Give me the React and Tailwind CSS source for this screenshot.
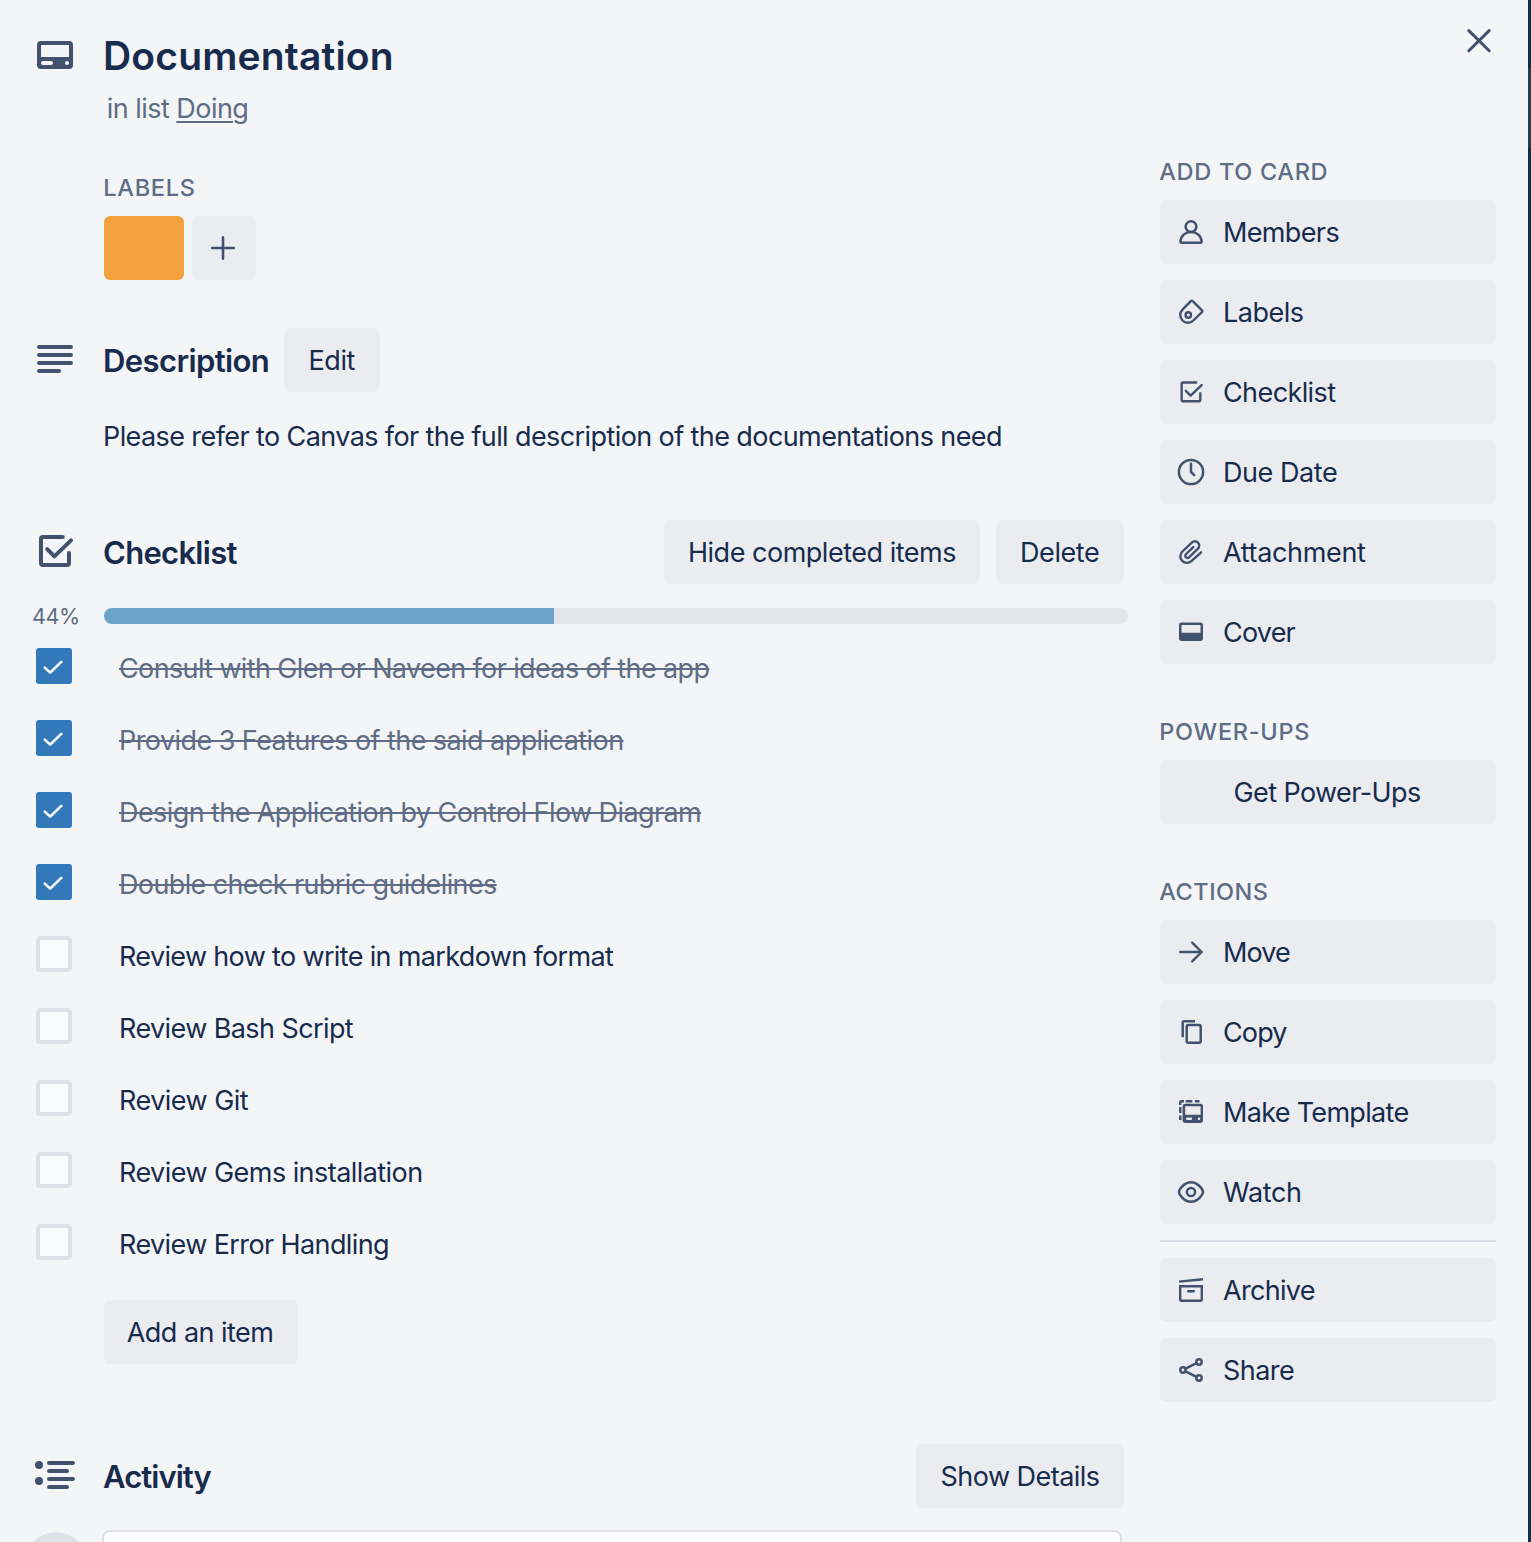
import React from "react";

const stroke = {
  fill: "none",
  stroke: "currentColor",
  strokeLinecap: "round",
  strokeLinejoin: "round",
};

function HeadIcon({ children, className = "" }) {
  return (
    <svg viewBox="0 0 24 24" className={`size-12 shrink-0 text-[#42526e] ${className}`} fill="currentColor">
      {children}
    </svg>
  );
}

function SideIcon({ children, box = "0 0 32 32" }) {
  return (
    <svg viewBox={box} className="size-8 shrink-0 text-[#42526e]" fill="currentColor">
      {children}
    </svg>
  );
}

const checkSquare = (
  <g {...stroke} strokeWidth="2">
    <path d="M15.9 5H6a1 1 0 0 0-1 1v12a1 1 0 0 0 1 1h12a1 1 0 0 0 1-1v-5" />
    <path d="M8.1 11.1l3.6 3.6 8.3-8" />
  </g>
);

const icons = {
  members: (
    <SideIcon>
      <g {...stroke} strokeWidth="2.5">
        <circle cx="16" cy="10.6" r="5.4" />
        <path d="M5.4 25.4C5.8 20 10.2 16 16 16s10.2 4 10.6 9.4a1.3 1.3 0 0 1-1.3 1.3H6.7a1.3 1.3 0 0 1-1.3-1.3z" />
      </g>
    </SideIcon>
  ),
  labels: (
    <SideIcon>
      <g {...stroke} strokeWidth="2.4">
        <path d="M7.5 13.7L15.8 5.2a1.3 1.3 0 0 1 1.9 0l9.3 9.1a1.3 1.3 0 0 1 0 1.9l-8.7 8.3A7.6 7.6 0 0 1 7.5 13.7z" />
        <circle cx="13.3" cy="19" r="2.7" />
      </g>
    </SideIcon>
  ),
  checklist: (
    <SideIcon box="0 0 24 24">
      <g {...stroke} strokeWidth="1.8">
        <path d="M15.9 4.900H6a1 1 0 0 0-1 1v12a1 1 0 0 0 1 1h12a1 1 0 0 0 1-1v-5" />
        <path d="M8.100 11.100l3.600 3.600 8.300-7.900" />
      </g>
    </SideIcon>
  ),
  due: (
    <SideIcon>
      <g {...stroke} strokeWidth="2.5">
        <circle cx="16" cy="16" r="12.1" />
        <path d="M16 7.8V16l3.2 3.2" />
      </g>
    </SideIcon>
  ),
  attachment: (
    <SideIcon box="0 0 24 24">
      <path
        {...stroke}
        strokeWidth="1.8"
        d="M19.6 12.2L12.3 18.8C10.3 20.6 7.3 20.6 5.4 18.7C3.5 16.8 3.5 13.7 5.4 11.8L12.6 4.9C13.9 3.6 15.9 3.6 17.2 4.9C18.5 6.2 18.5 8.2 17.2 9.4L10.5 16C9.8 16.7 8.8 16.7 8.2 16C7.5 15.4 7.5 14.4 8.2 13.7L13.7 8.3"
      />
    </SideIcon>
  ),
  cover: (
    <SideIcon>
      <path
        fillRule="evenodd"
        d="M6.7 6.4h18.6A2.7 2.7 0 0 1 28 9.1v13.2a2.7 2.7 0 0 1-2.7 2.7H6.7A2.7 2.7 0 0 1 4 22.3V9.1a2.7 2.7 0 0 1 2.7-2.7zM6.5 9.1v7.6h19V9.1z"
      />
    </SideIcon>
  ),
  move: (
    <SideIcon>
      <path {...stroke} strokeWidth="2.4" d="M5.2 16H26.6M17.2 6.7L26.6 16l-9.4 9.3" />
    </SideIcon>
  ),
  copy: (
    <SideIcon>
      <g {...stroke} strokeWidth="2.5">
        <path strokeLinecap="butt" d="M20 5.2H9a1.3 1.3 0 0 0-1.3 1.3V21.3" />
        <rect x="11.7" y="9" width="14" height="17.8" rx="1.5" />
      </g>
    </SideIcon>
  ),
  template: (
    <SideIcon>
      <path
        {...stroke}
        strokeLinecap="butt"
        strokeWidth="2.5"
        d="M5.3 9V6.6a1.3 1.3 0 0 1 1.3-1.3H9M10.7 5.3h6.6M20 5.3h4.5M5.3 11v6M5.3 19.5V24"
      />
      <path
        fillRule="evenodd"
        d="M10.3 7.7h15A2.7 2.7 0 0 1 28 10.4v13.9a2.7 2.7 0 0 1-2.7 2.7h-15a2.7 2.7 0 0 1-2.7-2.7V10.4a2.7 2.7 0 0 1 2.700-2.700zM10.2 10.300v8.400h15.400v-8.400zM12.200 21.600a1.200 1.200 0 0 0 0 2.400h3.700a1.200 1.200 0 0 0 0-2.400zM24 21.500a1.300 1.300 0 1 0 0 2.600 1.300 1.300 0 0 0 0-2.600z"
      />
    </SideIcon>
  ),
  watch: (
    <SideIcon>
      <g {...stroke} strokeWidth="2.5">
        <path d="M4 16C4 14.200 8.600 6.300 16 6.300S28 14.200 28 16S23.400 25.700 16 25.700S4 17.800 4 16z" />
        <circle cx="16" cy="16" r="4.1" />
      </g>
    </SideIcon>
  ),
  archive: (
    <SideIcon>
      <path {...stroke} strokeLinecap="butt" strokeWidth="2.4" d="M4.1 7.6L28 5.3" />
      <path
        {...stroke}
        strokeLinejoin="miter"
        strokeWidth="2.4"
        d="M5.2 12.2h21.6v13a1.5 1.5 0 0 1-1.5 1.5H6.7a1.5 1.5 0 0 1-1.5-1.5z"
      />
      <path {...stroke} strokeWidth="2.4" d="M13.2 17.3h5.6" />
    </SideIcon>
  ),
  share: (
    <SideIcon>
      <g {...stroke} strokeWidth="2.5">
        <circle cx="8" cy="16" r="2.7" />
        <circle cx="24" cy="8" r="2.7" />
        <circle cx="24" cy="24" r="2.7" />
        <path d="M10.5 14.7l11-5.5M10.5 17.3l11 5.5" />
      </g>
    </SideIcon>
  ),
};

const addToCard = [
  ["members", "Members", "tracking-[-0.64px]"],
  ["labels", "Labels", "tracking-[-0.5px]"],
  ["checklist", "Checklist", "tracking-[-0.6px]"],
  ["due", "Due Date", "tracking-[-0.43px]"],
  ["attachment", "Attachment", "tracking-[-0.35px]"],
  ["cover", "Cover", "tracking-[-0.8px]"],
];

const actions = [
  ["move", "Move", "tracking-[-0.9px]"],
  ["copy", "Copy", "tracking-[-0.85px]"],
  ["template", "Make Template", "tracking-[-0.68px]"],
  ["watch", "Watch", "tracking-[-0.35px]"],
];

const finalActions = [
  ["archive", "Archive", "tracking-[-0.7px]"],
  ["share", "Share", "tracking-[-0.54px]"],
];

const items = [
  ["Consult with Glen or Naveen for ideas of the app", true, "tracking-[-0.63px]"],
  ["Provide 3 Features of the said application", true, "tracking-[-0.565px]"],
  ["Design the Application by Control Flow Diagram", true, "tracking-[-0.585px]"],
  ["Double check rubric guidelines", true, "tracking-[-0.618px]"],
  ["Review how to write in markdown format", false, "tracking-[-0.65px]"],
  ["Review Bash Script", false, "tracking-[-0.59px]"],
  ["Review Git", false, "tracking-[-0.52px]"],
  ["Review Gems installation", false, "tracking-[-0.55px]"],
  ["Review Error Handling", false, "tracking-[-0.6px]"],
];

function SideButton({ item: [icon, label, tracking] }) {
  return (
    <button className="flex h-16 w-full items-center gap-4 rounded-md bg-[#ebecf0] pl-[15px] text-left">
      {icons[icon]}
      <span className={`pt-[2px] ${tracking}`}>{label}</span>
    </button>
  );
}

function SideHeading({ children, className }) {
  return (
    <h3 className={`-ml-[0.75px] h-6 text-[23.5px] leading-6 font-medium text-[#5e6c84] ${className}`}>{children}</h3>
  );
}

function Button({ children, className }) {
  return (
    <button className={`h-16 shrink-0 rounded-md bg-[#ebecf0] pt-[2px] text-left ${className}`}>{children}</button>
  );
}

function CheckItem({ item: [label, done, tracking] }) {
  return (
    <li className="flex h-[72px] items-start">
      {done ? (
        <span className="ml-9 flex size-9 shrink-0 items-center justify-center rounded-[3px] bg-[#3179ba]">
          <svg viewBox="0 0 36 36" className="size-9 text-white">
            <path {...stroke} strokeWidth="2.6" d="M8.8 19.6l5.4 5L25.3 13.900" />
          </svg>
        </span>
      ) : (
        <span className="ml-9 size-9 shrink-0 rounded-[4px] border-4 border-[#dfe1e6] bg-[#fafbfc]" />
      )}
      <span
        className={`mt-[5px] ml-[47px] leading-8 whitespace-nowrap ${tracking} ${
          done ? "text-[#5e6c84] line-through decoration-2" : ""
        }`}
      >
        {label}
      </span>
    </li>
  );
}

export default function App() {
  return (
    <div className="flex h-[1542px] w-[1531px] overflow-hidden bg-[#f4f5f7] font-['Inter',sans-serif] text-[27px] leading-8 text-[#172b4d]">
      <main className="w-[1128px] shrink-0">
        <header className="flex pt-8">
          <HeadIcon className="-mt-px ml-[31px]">
            <path
              fillRule="evenodd"
              d="M5 5h14a2 2 0 0 1 2 2v10a2 2 0 0 1-2 2H5a2 2 0 0 1-2-2V7a2 2 0 0 1 2-2zM5 7v6h14V7zM6 15a1 1 0 0 0 0 2h4a1 1 0 0 0 0-2zM18 15a1 1 0 1 0 0 2 1 1 0 0 0 0-2z"
            />
          </HeadIcon>
          <div className="ml-6">
            <h1 className="h-12 text-[39px] leading-[48px] font-semibold tracking-[0.18px]">Documentation</h1>
            <p className="mt-[13px] ml-[3.75px] tracking-[-0.54px] text-[#5e6c84]">
              in list <a className="underline decoration-2 underline-offset-[3px]">Doing</a>
            </p>
          </div>
        </header>

        <section className="mt-[51px] ml-[104px]">
          <SideHeading className="tracking-[0.73px]">LABELS</SideHeading>
          <div className="mt-4 flex gap-2">
            <span className="h-16 w-20 rounded-md bg-[#f2a33f]" />
            <button className="flex size-16 items-center justify-center rounded-md bg-[#ebecf0] text-[#42526e]">
              <svg viewBox="0 0 32 32" className="mr-[2px] size-8">
                <path {...stroke} strokeWidth="2.6" d="M16 5.200v21.600M5.200 16h21.600" />
              </svg>
            </button>
          </div>
        </section>

        <section className="mt-12">
          <div className="flex h-16 items-center">
            <HeadIcon className="-mt-[2px] ml-[31px]">
              <rect x="3" y="5" width="18" height="2" rx="1" />
              <rect x="3" y="9" width="18" height="2" rx="1" />
              <rect x="3" y="13" width="18" height="2" rx="1" />
              <rect x="3" y="17" width="12" height="2" rx="1" />
            </HeadIcon>
            <h2 className="ml-6 w-[181px] pt-px text-[31px] font-semibold tracking-[-0.6px]">Description</h2>
            <Button className="w-24 pl-[24.5px] tracking-[-0.4px]">Edit</Button>
          </div>
          <p className="mt-[29px] ml-[103px] tracking-[-0.595px] whitespace-nowrap">
            Please refer to Canvas for the full description of the documentations need
          </p>
        </section>

        <section className="mt-[67px]">
          <div className="flex h-16 items-center">
            <HeadIcon className="-mt-[2px] ml-[31px]">{checkSquare}</HeadIcon>
            <h2 className="ml-6 flex-1 pt-px text-[31px] font-semibold tracking-[-0.7px]">Checklist</h2>
            <Button className="w-[316px] pl-6 tracking-[-0.49px]">Hide completed items</Button>
            <Button className="mr-1 ml-4 w-32 pl-6 tracking-[-0.415px]">Delete</Button>
          </div>
          <div className="mt-6 flex h-4 items-center">
            <span className="w-[104px] pl-8 text-[21.5px] leading-4 tracking-[-0.45px] text-[#5e6c84]">44%</span>
            <div className="h-4 flex-1 overflow-hidden rounded-full bg-[#e2e4e9]">
              <div className="h-full w-[450px] bg-[#6ba3cb]" />
            </div>
          </div>
          <ul className="mt-6">
            {items.map((item) => (
              <CheckItem key={item[0]} item={item} />
            ))}
          </ul>
          <Button className="mt-1 ml-[104px] w-[194px] pl-[22.75px] tracking-[-0.534px]">Add an item</Button>
        </section>

        <section className="mt-20">
          <div className="flex h-16 items-center">
            <HeadIcon className="-mt-[2px] ml-[31px]">
              <circle cx="4" cy="7" r="2" />
              <circle cx="4" cy="15" r="2" />
              <rect x="8" y="5" width="14" height="2" rx="1" />
              <rect x="8" y="9" width="11" height="2" rx="1" />
              <rect x="8" y="13" width="14" height="2" rx="1" />
              <rect x="8" y="17" width="11" height="2" rx="1" />
            </HeadIcon>
            <h2 className="ml-6 flex-1 pt-px text-[31px] font-semibold tracking-[-0.95px]">Activity</h2>
            <Button className="mr-1 w-52 pl-[24.5px] tracking-[-0.53px]">Show Details</Button>
          </div>
          <div className="mt-[22px] flex">
            <span className="mt-[2px] ml-6 size-16 shrink-0 rounded-full bg-[#dfe1e6]" />
            <div className="ml-[14px] h-20 w-[1020px] rounded-lg border-2 border-[#dfe1e6] bg-white" />
          </div>
        </section>
      </main>

      <aside className="ml-8 w-[336px] shrink-0">
        <div className="flex h-40 justify-end pt-6">
          <svg viewBox="0 0 32 32" className="mr-[1px] size-8 text-[#42526e]">
            <path {...stroke} strokeWidth="3" d="M5.8 6.6l20.400 20.200M26.200 6.600L5.800 26.800" />
          </svg>
        </div>
        <SideHeading className="tracking-[0.7px]">ADD TO CARD</SideHeading>
        <div className="mt-4 flex flex-col gap-4">
          {addToCard.map((item) => (
            <SideButton key={item[0]} item={item} />
          ))}
        </div>
        <SideHeading className="mt-14 tracking-[0.72px]">POWER-UPS</SideHeading>
        <button className="mt-4 h-16 w-full rounded-md bg-[#ebecf0] pt-[2px] pl-[73.5px] text-left tracking-[-0.6px]">
          Get Power-Ups
        </button>
        <SideHeading className="mt-14 tracking-[0.5px]">ACTIONS</SideHeading>
        <div className="mt-4 flex flex-col gap-4">
          {actions.map((item) => (
            <SideButton key={item[0]} item={item} />
          ))}
          <hr className="border-t-2 border-[#d8dbe2]" />
          {finalActions.map((item) => (
            <SideButton key={item[0]} item={item} />
          ))}
        </div>
      </aside>

      <div className="ml-8 flex w-[3px] shrink-0 flex-col bg-[#0f2d44]">
        <div className="mt-[68px] h-20 bg-[#263a4c]" />
      </div>
    </div>
  );
}
